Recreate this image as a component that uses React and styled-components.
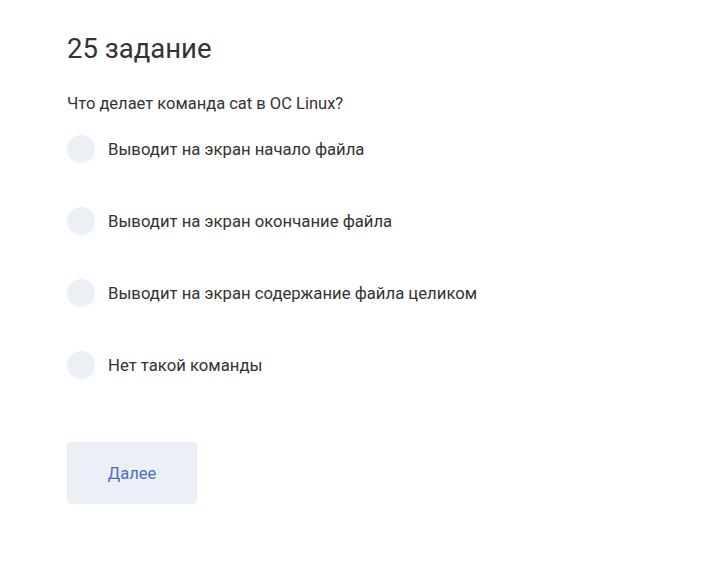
import React from "react";
import styled, { createGlobalStyle } from "styled-components";

const Global = createGlobalStyle`
  html, body { margin: 0; padding: 0; background: #fff; }
  body { font-family: Roboto, "Noto Sans", Arial, sans-serif; color: #333; }
`;

const Page = styled.div`
  padding: 33px 67px 40px;
`;

const Title = styled.h1`
  margin: 0;
  font-size: 27.5px;
  font-weight: 400;
  line-height: 32px;
  color: #333;
`;

const Question = styled.p`
  margin: 29px 0 0;
  font-size: 16.5px;
  line-height: 20px;
  color: #333;
`;

const Options = styled.div`
  display: flex;
  flex-direction: column;
  gap: 44px;
  margin-top: 21px;
`;

const Option = styled.label`
  display: flex;
  align-items: center;
  gap: 13px;
  font-size: 16.7px;
  color: #333;
  cursor: pointer;
`;

const Radio = styled.span`
  width: 28px;
  height: 28px;
  border-radius: 50%;
  background: #ebf0f7;
  flex-shrink: 0;
`;

const Button = styled.button`
  margin-top: 63px;
  width: 130px;
  height: 62px;
  border: none;
  border-radius: 4px;
  background: #ebf0f7;
  color: #4a6fbf;
  font-family: inherit;
  font-size: 16.5px;
  cursor: pointer;
`;

const options = [
  "Выводит на экран начало файла",
  "Выводит на экран окончание файла",
  "Выводит на экран содержание файла целиком",
  "Нет такой команды",
];

export default function App() {
  return (
    <Page>
      <Global />
      <Title>25 задание</Title>
      <Question>Что делает команда cat в ОС Linux?</Question>
      <Options>
        {options.map((o) => (
          <Option key={o}>
            <Radio />
            {o}
          </Option>
        ))}
      </Options>
      <Button>Далее</Button>
    </Page>
  );
}
